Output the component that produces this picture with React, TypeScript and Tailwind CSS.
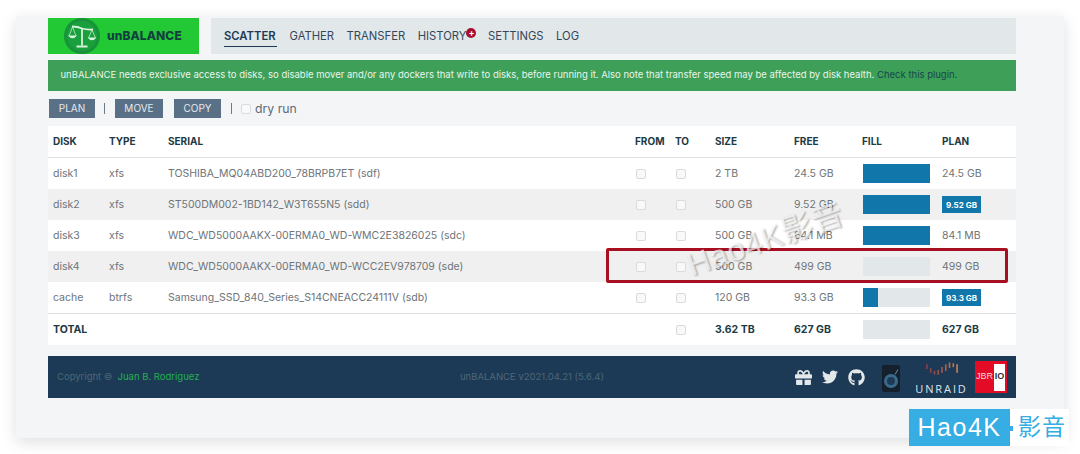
import { FaGift, FaGithub, FaTwitter } from "react-icons/fa";

type Row = {
	disk: string;
	type: string;
	serial: string;
	size: string;
	free: string;
	fill: number;
	plan: string;
	badge?: boolean;
};

const rows: Row[] = [
	{ disk: "disk1", type: "xfs", serial: "TOSHIBA_MQ04ABD200_78BRPB7ET (sdf)", size: "2 TB", free: "24.5 GB", fill: 100, plan: "24.5 GB" },
	{ disk: "disk2", type: "xfs", serial: "ST500DM002-1BD142_W3T655N5 (sdd)", size: "500 GB", free: "9.52 GB", fill: 100, plan: "9.52 GB", badge: true },
	{ disk: "disk3", type: "xfs", serial: "WDC_WD5000AAKX-00ERMA0_WD-WMC2E3826025 (sdc)", size: "500 GB", free: "84.1 MB", fill: 100, plan: "84.1 MB" },
	{ disk: "disk4", type: "xfs", serial: "WDC_WD5000AAKX-00ERMA0_WD-WCC2EV978709 (sde)", size: "500 GB", free: "499 GB", fill: 0, plan: "499 GB" },
	{ disk: "cache", type: "btrfs", serial: "Samsung_SSD_840_Series_S14CNEACC24111V (sdb)", size: "120 GB", free: "93.3 GB", fill: 22, plan: "93.3 GB", badge: true },
];

const gridCols = "grid grid-cols-[56px_59px_467px_40px_40px_79px_68px_80px_74px] items-center";

function Check() {
	return <span className="block w-[10px] h-[10px] rounded-[2px] border border-[#d9dcdf] bg-[#f9f9f9]" />;
}

function Bar({ pct }: { pct: number }) {
	return (
		<div className="h-[19px] w-[67px] ml-[1px] bg-[#e2e7ea]">
			<div className="h-full bg-[#1177aa]" style={{ width: `${pct}%` }} />
		</div>
	);
}

function ScaleLogo() {
	return (
		<svg viewBox="0 0 36 36" className="w-[36px] h-[36px]">
			<circle cx="18" cy="18" r="18" fill="#17933a" />
			<circle cx="18" cy="18" r="15" fill="#1a9f3d" />
			<path d="M8 8.5 Q14 8.5 18 10.5 Q23 12 29 11.5" stroke="#d9f3df" strokeWidth="1.8" fill="none" />
			<path d="M18 10 V27.5" stroke="#d9f3df" strokeWidth="1.8" fill="none" />
			<path d="M12.5 28.5 H23.5" stroke="#d9f3df" strokeWidth="2" fill="none" />
			<path d="M8.5 9 L5 18 M8.5 9 L12 18 M28 12 L24.5 20 M28 12 L31.5 20" stroke="#d9f3df" strokeWidth="0.7" fill="none" />
			<path d="M4 17.5 H13 Q8.5 23 4 17.5 Z M23.5 19.5 H32.5 Q28 25 23.5 19.5 Z" fill="#d9f3df" />
		</svg>
	);
}

function UnraidLogo() {
	const bars = [
		[1, 2, 7, "#8f3f4a"],
		[5, 6, 11, "#93434b"],
		[9, 9, 13, "#98494c"],
		[13, 8, 13, "#a0524d"],
		[17, 5, 11, "#a8594e"],
		[21, 2, 9, "#b0624f"],
		[25, 0, 6, "#b86b52"],
		[29, 1, 5, "#c07555"],
		[33, 2, 11, "#c8805a"],
	] as const;
	return (
		<div className="flex w-[51px] flex-col items-center">
			<svg viewBox="0 0 34 14" className="h-[14px] w-[32px]">
				{bars.map(([x, y1, y2, c]) => (
					<line key={x} x1={x} x2={x} y1={y1} y2={y2} stroke={c} strokeWidth="1.7" />
				))}
			</svg>
			<span className="mt-[8px] text-[11px] leading-[9px] tracking-[1.9px] whitespace-nowrap text-[#dfe5ea] font-['Open_Sans',sans-serif]">UNRAID</span>
		</div>
	);
}

export default function App() {
	return (
		<div className="relative w-[1080px] h-[454px] overflow-hidden bg-white font-['Inter',sans-serif]">
			<div className="ml-[16px] mt-[16px] w-[1048px] h-[422px] rounded-[2px] bg-[#f4f5f7] pl-[32px] pr-[48px] pt-[2px] shadow-[0_4px_16px_rgba(0,0,0,0.13)]">
				{/* cabecera */}
				<div className="flex h-[36px] gap-[12px]">
					<div className="flex w-[151px] items-center bg-[#22c935] pl-[16px]">
						<ScaleLogo />
						<span className="ml-[7px] text-[12px] font-extrabold tracking-[0.1px] text-[#123f3f]">unBALANCE</span>
					</div>
					<nav className="flex flex-1 items-center gap-[12.5px] bg-[#e2e7ea] pl-[13px] text-[11.25px] text-[#33475b]">
						<span className="min-w-[53px] border-b border-[#1c3a55] pt-[3px] pb-[1px] font-semibold text-[#1c3a55]">SCATTER</span>
						<span>GATHER</span>
						<span>TRANSFER</span>
						<span className="relative">
							HISTORY
							<span className="absolute -right-[10px] top-0 flex h-[10px] w-[10px] items-center justify-center rounded-full bg-[#a50e2d] text-[9px] leading-none font-bold text-white">+</span>
						</span>
						<span className="ml-[9px]">SETTINGS</span>
						<span>LOG</span>
					</nav>
				</div>

				{/* aviso */}
				<div className="mt-[6px] flex h-[31px] items-center bg-[#3d9f58] pl-[12.5px] text-[9.5px] text-[#e9f5ec]">
					<span>
						unBALANCE needs exclusive access to disks, so disable mover and/or any dockers that write to disks, before running it. Also note that transfer speed may be affected by disk health. <span className="text-[#17484c]">Check this plugin.</span>
					</span>
				</div>

				{/* acciones */}
				<div className="mt-[8px] flex h-[19px] items-center pl-[1px] text-[12px] text-[#5c6b78]">
					<button className="h-[19px] w-[46px] bg-[#5a7086] text-[10px] text-[#e4e9ee]">PLAN</button>
					<span className="ml-[9px] mr-[10px] h-[11px] w-[1px] bg-[#6b7a86]" />
					<button className="h-[19px] w-[48px] bg-[#5a7086] text-[10px] text-[#e4e9ee]">MOVE</button>
					<button className="ml-[11px] h-[19px] w-[47px] bg-[#5a7086] text-[10px] text-[#e4e9ee]">COPY</button>
					<span className="ml-[10px] mr-[9px] h-[11px] w-[1px] bg-[#6b7a86]" />
					<Check />
					<span className="ml-[4px] pt-[1px] text-[12.25px]">dry run</span>
				</div>

				{/* tabla */}
				<div className="mt-[8px] bg-white text-[10.5px] text-[#6e7478]">
					<div className={`${gridCols} h-[32px] border-b border-[#dfe3e6] pl-[5px] text-[10px] font-bold text-[#1c3a45]`}>
						<span>DISK</span>
						<span>TYPE</span>
						<span>SERIAL</span>
						<span>FROM</span>
						<span>TO</span>
						<span>SIZE</span>
						<span>FREE</span>
						<span>FILL</span>
						<span>PLAN</span>
					</div>
					{rows.map((r, i) => (
						<div key={r.disk} className={`${gridCols} h-[31px] pl-[5px] ${i % 2 === 1 ? "bg-[#f0f0f0]" : ""}`}>
							<span>{r.disk}</span>
							<span>{r.type}</span>
							<span className="whitespace-nowrap">{r.serial}</span>
							<span className="pl-[1px]"><Check /></span>
							<span className="pl-[1px]"><Check /></span>
							<span>{r.size}</span>
							<span>{r.free}</span>
							<Bar pct={r.fill} />
							{r.badge ? (
								<span className="flex h-[17px] w-[39px] items-center justify-center bg-[#1177aa] text-[8px] font-bold text-white">{r.plan}</span>
							) : (
								<span>{r.plan}</span>
							)}
						</div>
					))}
					<div className={`${gridCols} h-[32px] border-t border-[#dfe3e6] pl-[5px] font-bold text-[#1c3a45]`}>
						<span className="col-span-4">TOTAL</span>
						<span className="pl-[1px]"><Check /></span>
						<span>3.62 TB</span>
						<span>627 GB</span>
						<Bar pct={0} />
						<span>627 GB</span>
					</div>
				</div>

				{/* pie */}
				<div className="relative mt-[11px] flex h-[42px] items-center bg-[#1c3a55] pl-[9px] text-[9.5px] text-[#4f6677]">
					<span>Copyright ©</span>
					<span className="ml-[5px] text-[#22b14c]">Juan B. Rodriguez</span>
					<span className="absolute left-[412px]">unBALANCE v2021.04.21 (5.6.4)</span>
					<div className="ml-auto flex items-center pr-[9px]">
						<FaGift className="h-[17px] w-[17px] text-[#e2e7ea]" />
						<FaTwitter className="ml-[10px] h-[16px] w-[16px] text-[#e2e7ea]" />
						<FaGithub className="ml-[10px] h-[17px] w-[17px] text-[#e2e7ea]" />
						<div className="relative ml-[17px] mt-[2px] h-[27px] w-[18px] rounded-[2px] bg-[#14202c]">
							<span className="absolute left-[2px] top-[9px] h-[14px] w-[14px] rounded-full border-[3px] border-[#3b6a8f] bg-[#1c3a55]" />
							<span className="absolute right-[3px] top-[4px] h-[6px] w-[1px] rotate-[30deg] bg-[#5f7f99]" />
						</div>
						<div className="ml-[16px]"><UnraidLogo /></div>
						<div className="ml-[8px] flex h-[32px] w-[32px] items-center bg-[#e30b26] pr-[2px] text-[9px] font-['Liberation_Sans',sans-serif]">
							<span className="flex-1 text-center text-[#f5d4d8]">JBR</span>
							<span className="flex h-[27px] w-[11px] items-center justify-center bg-white font-bold text-[#333]">IO</span>
						</div>
					</div>
				</div>
			</div>

			{/* recuadro rojo de la captura */}
			<div className="absolute left-[606px] top-[248px] h-[35px] w-[402px] rounded-[2px] border-[3px] border-[#a81022]" />

			{/* marcas de agua */}
			<div className="absolute left-[684px] top-[222px] -rotate-[19deg] text-[31px] leading-[36px] tracking-[1px] whitespace-nowrap text-white/70 [text-shadow:1px_1px_2px_rgba(0,0,0,0.35)] font-['Liberation_Sans','Noto_Sans_CJK_SC',sans-serif]">Hao4K影音</div>
			<div className="absolute left-[909px] top-[409px] flex h-[37px] w-[160px] items-center bg-white text-[25px] font-['Liberation_Sans','Noto_Sans_CJK_SC',sans-serif]">
				<span className="relative flex h-full w-[101px] items-center justify-center bg-[#36ade3] tracking-[1.5px] text-white">
					Hao4K
					<span className="absolute -right-[3px] top-[17px] h-[5px] w-[5px] bg-[#36ade3]" />
				</span>
				<span className="ml-[8px] text-[23px] tracking-[1px] text-[#36ade3]">影音</span>
			</div>
		</div>
	);
}
